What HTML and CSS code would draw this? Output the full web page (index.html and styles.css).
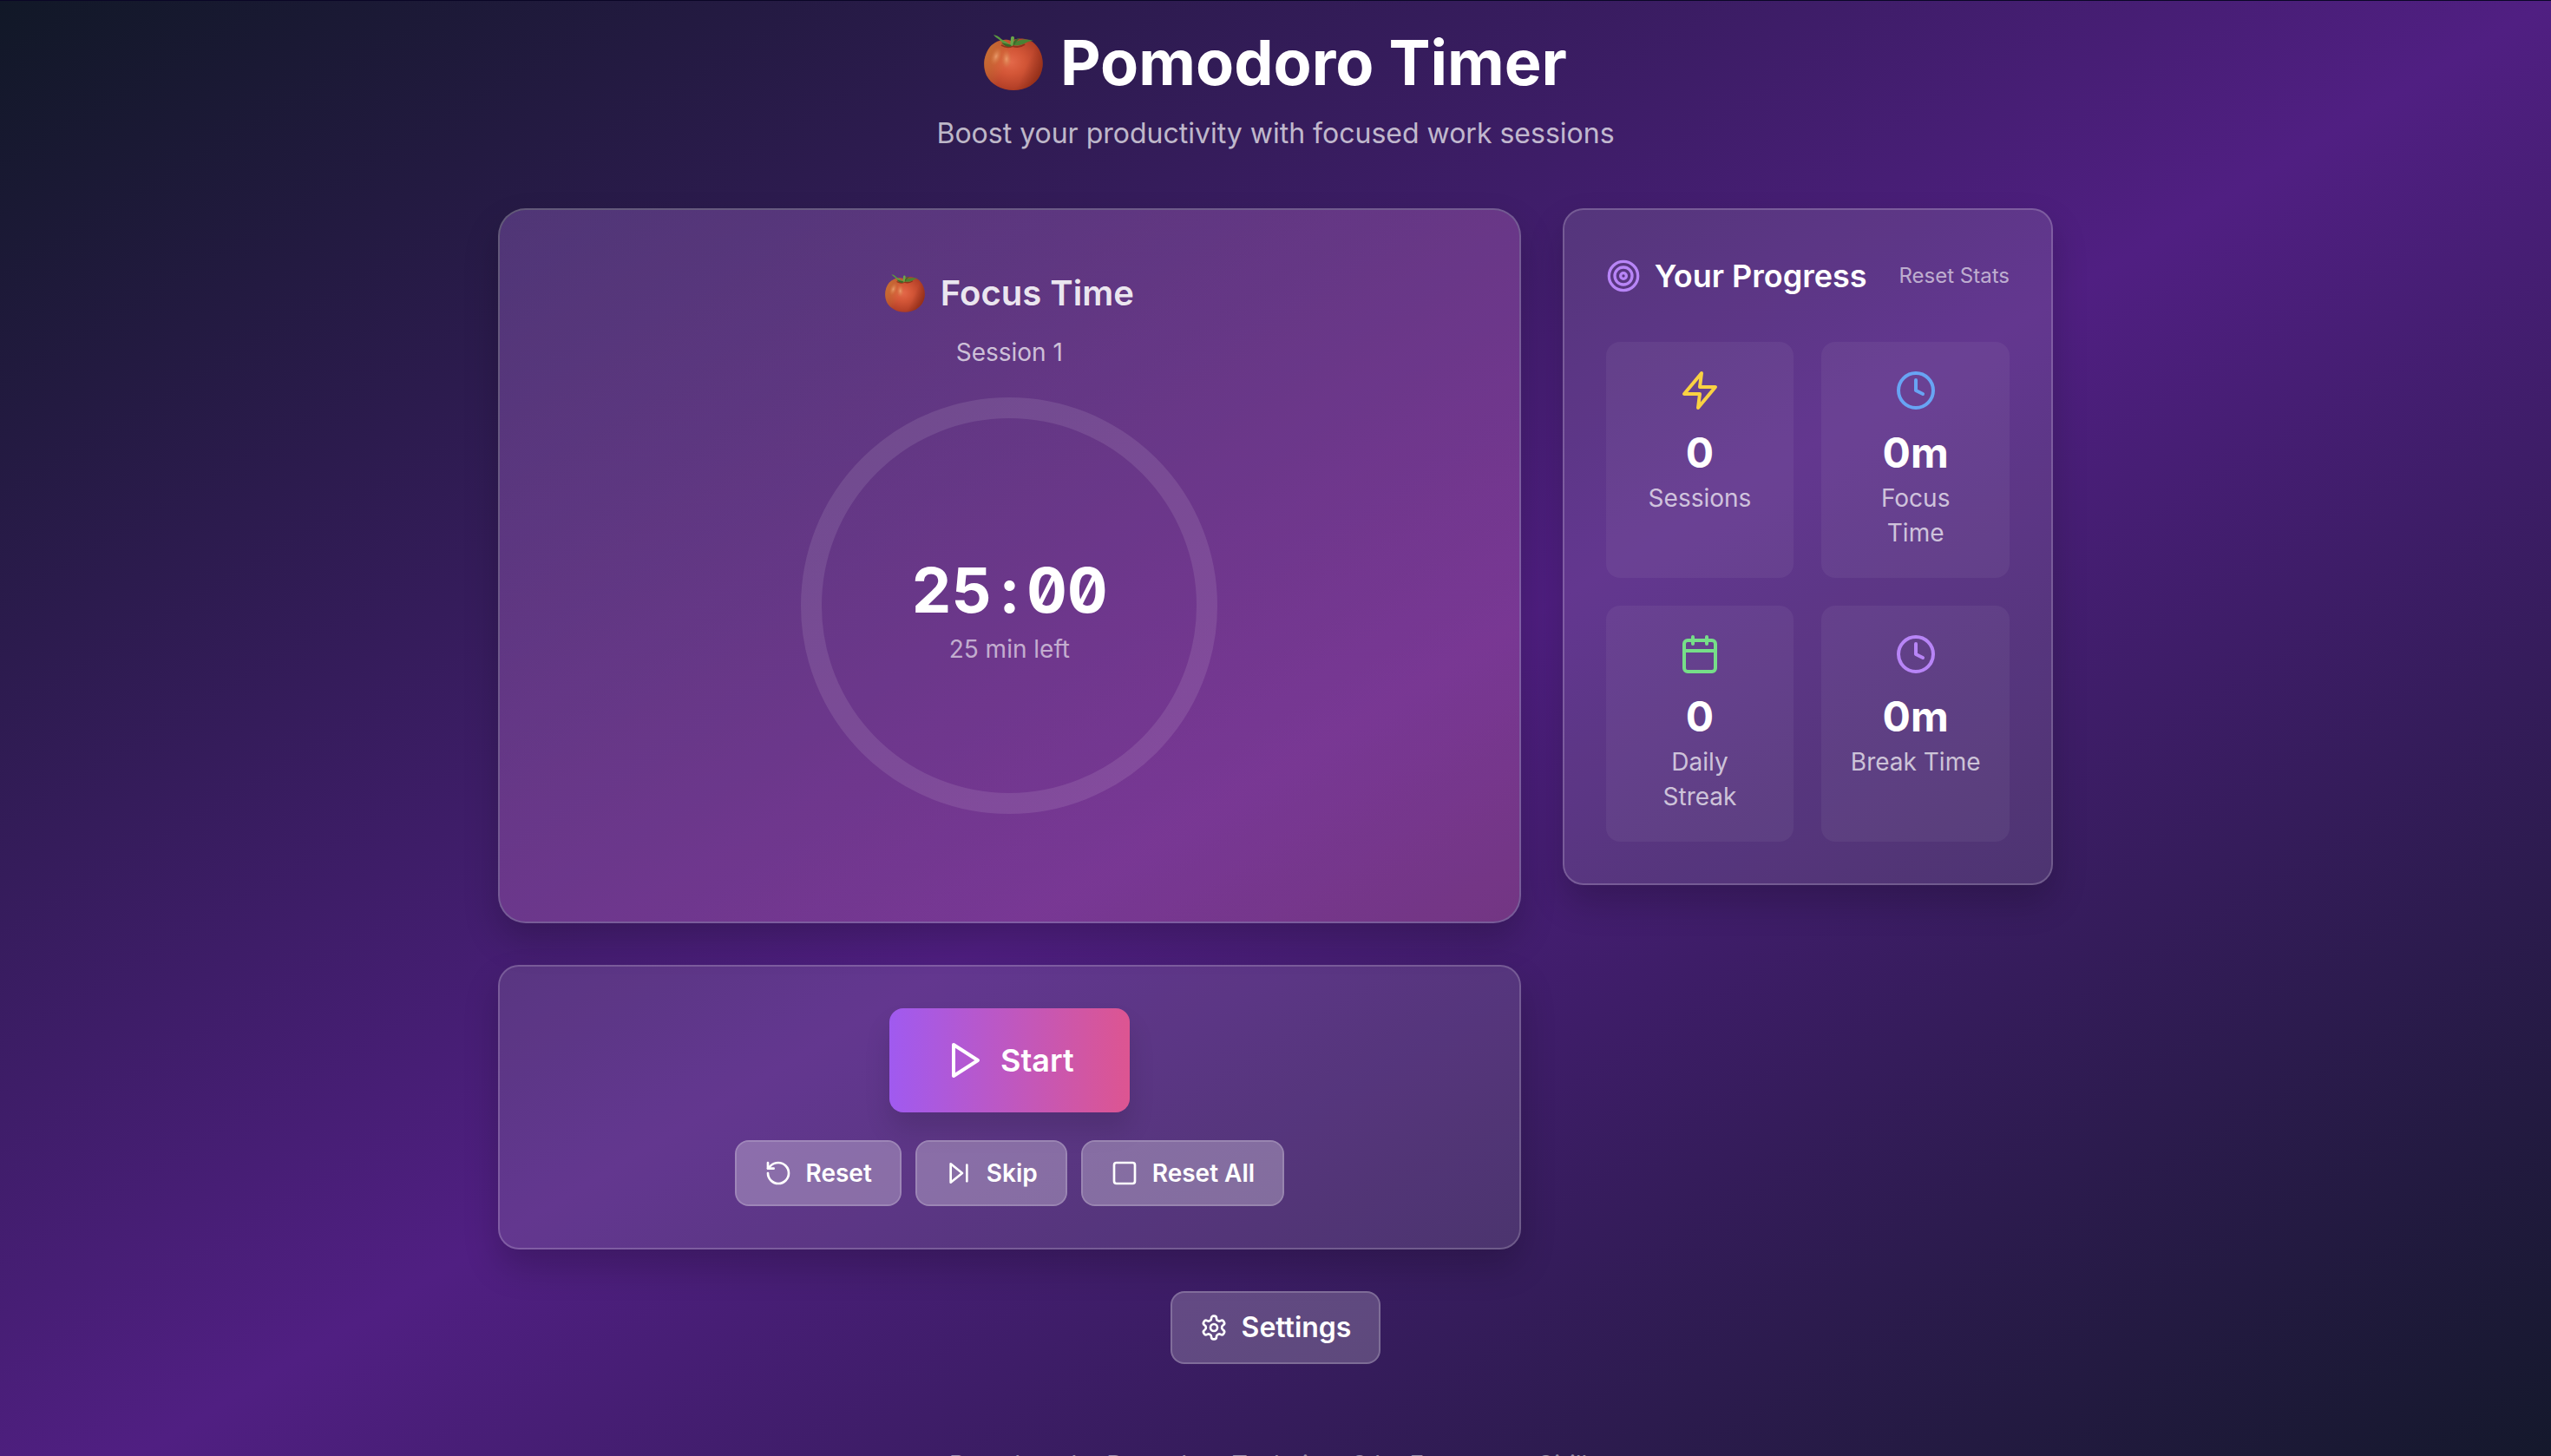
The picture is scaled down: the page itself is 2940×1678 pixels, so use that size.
FILE: index.html
```html
<!DOCTYPE html>
<html lang="en">
<head>
<meta charset="utf-8">
<title>Pomodoro Timer</title>
<link rel="stylesheet" href="styles.css">
</head>
<body>
<svg class="defs" aria-hidden="true">
  <defs>
    <radialGradient id="tomato-skin" cx="0.45" cy="0.45" r="0.6">
      <stop offset="0" stop-color="#e4694a"/>
      <stop offset="0.4" stop-color="#d35637"/>
      <stop offset="0.8" stop-color="#b8432a"/>
      <stop offset="1" stop-color="#a8381f"/>
    </radialGradient>
    <radialGradient id="tomato-glow">
      <stop offset="0" stop-color="#eda070" stop-opacity="0.9"/>
      <stop offset="1" stop-color="#cf7a40" stop-opacity="0"/>
    </radialGradient>
    <linearGradient id="tomato-shade" x1="0" y1="0.3" x2="1" y2="0.7">
      <stop offset="0" stop-color="#c98138" stop-opacity="0.7"/>
      <stop offset="0.4" stop-color="#c98138" stop-opacity="0"/>
      <stop offset="0.7" stop-color="#7c2410" stop-opacity="0"/>
      <stop offset="1" stop-color="#7c2410" stop-opacity="0.6"/>
    </linearGradient>
    <symbol id="tomato" viewBox="0 0 68 64">
      <path id="tomato-body" d="M31 7C38 3 53 3 60 12c8 9 10 23 5 34-5 11-17 18-31 18S8 57 3 47C-2 36 0 23 7 14 14 6 25 4 31 7z" fill="url(#tomato-skin)"/>
      <path d="M31 7C38 3 53 3 60 12c8 9 10 23 5 34-5 11-17 18-31 18S8 57 3 47C-2 36 0 23 7 14 14 6 25 4 31 7z" fill="url(#tomato-shade)"/>
      <ellipse cx="14" cy="25" rx="6" ry="11" fill="url(#tomato-glow)" transform="rotate(20 14 25)"/>
      <ellipse cx="26" cy="28" rx="6" ry="11" fill="url(#tomato-glow)"/>
      <path d="M20 12c5 3 9 3 13 1 6 2 10 1 14-2" fill="none" stroke="#7a2412" stroke-width="2" opacity="0.7"/>
      <path d="M11 0c5 1 7 3 9 5 4 2 8 5 11 7l-1 2c-5-2-9-5-12-8-2-2-5-3-7-6z" fill="#5c9a41"/>
      <path d="M33 12c5-6 12-8 24-5-4 0-6 1-8 2-5 3-10 4-16 3z" fill="#4a8234"/>
      <path d="M33 11c1-4 4-7 9-7-3 2-5 4-7 8z" fill="#3c6c2a"/>
      <path d="M31 4c0-3 4-3 4 0l-2 9h-3z" fill="#69a64a"/>
      <path d="M20 9c4 1 8 2 12 3l-2 2c-4 0-8-2-10-5z" fill="#3b6628"/>
    </symbol>
  </defs>
</svg>
<div class="page">
  <header class="header">
    <h1 class="title"><svg class="title-icon" aria-hidden="true"><use href="#tomato"/></svg>Pomodoro Timer</h1>
    <p class="subtitle">Boost your productivity with focused work sessions</p>
  </header>

  <main class="layout">
    <div class="main-column">
      <section class="card timer">
        <h2 class="mode"><svg class="mode-icon" aria-hidden="true"><use href="#tomato"/></svg>Focus Time</h2>
        <p class="session">Session 1</p>
        <div class="dial">
          <div class="time">25<span class="colon">:</span>00</div>
          <div class="left">25 min left</div>
        </div>
      </section>

      <section class="card controls">
        <button class="btn btn-primary" type="button">
          <svg class="icon icon-lg" viewBox="0 0 24 24"><path d="M5 3l14 9-14 9z"/></svg>Start
        </button>
        <div class="button-row">
          <button class="btn btn-glass" type="button">
            <svg class="icon icon-sm" viewBox="0 0 24 24"><path d="M3 12a9 9 0 1 0 9-9 9.75 9.75 0 0 0-6.74 2.74L3 8"/><path d="M3 3v5h5"/></svg>Reset
          </button>
          <button class="btn btn-glass" type="button">
            <svg class="icon icon-sm" viewBox="0 0 24 24"><path d="M5 4l10 8-10 8z"/><path d="M19 5v14"/></svg>Skip
          </button>
          <button class="btn btn-glass" type="button">
            <svg class="icon icon-sm" viewBox="0 0 24 24"><rect x="3" y="3" width="18" height="18" rx="2"/></svg>Reset All
          </button>
        </div>
      </section>
    </div>

    <aside class="card progress">
      <div class="progress-head">
        <h2 class="progress-title">
          <svg class="icon icon-md violet" viewBox="0 0 24 24"><circle cx="12" cy="12" r="10"/><circle cx="12" cy="12" r="6"/><circle cx="12" cy="12" r="2"/></svg>Your Progress
        </h2>
        <button class="link-button" type="button">Reset Stats</button>
      </div>
      <div class="stats">
        <div class="stat">
          <svg class="icon icon-lg yellow" viewBox="0 0 24 24"><path d="M13 2L3 14h9l-1 8 10-12h-9z"/></svg>
          <div class="value">0</div>
          <div class="label">Sessions</div>
        </div>
        <div class="stat">
          <svg class="icon icon-lg blue" viewBox="0 0 24 24"><circle cx="12" cy="12" r="10"/><path d="M12 6v6l4 2"/></svg>
          <div class="value">0m</div>
          <div class="label">Focus Time</div>
        </div>
        <div class="stat">
          <svg class="icon icon-lg green" viewBox="0 0 24 24"><rect x="3" y="4" width="18" height="18" rx="2"/><path d="M16 2v4M8 2v4M3 10h18"/></svg>
          <div class="value">0</div>
          <div class="label">Daily Streak</div>
        </div>
        <div class="stat">
          <svg class="icon icon-lg violet" viewBox="0 0 24 24"><circle cx="12" cy="12" r="10"/><path d="M12 6v6l4 2"/></svg>
          <div class="value">0m</div>
          <div class="label">Break Time</div>
        </div>
      </div>
    </aside>
  </main>

  <div class="settings-row">
    <button class="btn btn-settings" type="button">
      <svg class="icon icon-sm" viewBox="0 0 24 24"><path d="M12.22 2h-.44a2 2 0 0 0-2 2v.18a2 2 0 0 1-1 1.73l-.43.25a2 2 0 0 1-2 0l-.15-.08a2 2 0 0 0-2.73.73l-.22.38a2 2 0 0 0 .73 2.73l.15.1a2 2 0 0 1 1 1.72v.51a2 2 0 0 1-1 1.74l-.15.09a2 2 0 0 0-.73 2.73l.22.38a2 2 0 0 0 2.73.73l.15-.08a2 2 0 0 1 2 0l.43.25a2 2 0 0 1 1 1.73V20a2 2 0 0 0 2 2h.44a2 2 0 0 0 2-2v-.18a2 2 0 0 1 1-1.73l.43-.25a2 2 0 0 1 2 0l.15.08a2 2 0 0 0 2.73-.73l.22-.39a2 2 0 0 0-.73-2.73l-.15-.08a2 2 0 0 1-1-1.74v-.5a2 2 0 0 1 1-1.74l.15-.09a2 2 0 0 0 .73-2.73l-.22-.38a2 2 0 0 0-2.73-.73l-.15.08a2 2 0 0 1-2 0l-.43-.25a2 2 0 0 1-1-1.73V4a2 2 0 0 0-2-2z"/><circle cx="12" cy="12" r="3"/></svg>Settings
    </button>
  </div>

  <footer class="footer">Based on the Pomodoro Technique® by Francesco Cirillo</footer>
</div>
</body>
</html>
```

FILE: styles.css
```css
* {
  box-sizing: border-box;
  margin: 0;
}

html {
  height: 100%;
}

body {
  height: 100%;
  overflow: hidden;
  font-family: Inter, sans-serif;
  color: #fff;
  background: #111827;
}

.defs {
  position: absolute;
  width: 0;
  height: 0;
}

.page {
  padding: 31px 64px 64px;
  border-top: 1px solid #0a0626;
  background: linear-gradient(to bottom right, #111827, #501f82, #111827);
}

.header {
  margin-bottom: 62px;
  text-align: center;
}

.title {
  display: flex;
  justify-content: center;
  align-items: center;
  gap: 20px;
  margin-bottom: 18px;
  font-size: 72px;
  line-height: 80px;
  font-weight: 700;
}

.title-icon {
  width: 68px;
  height: 64px;
}

.subtitle {
  font-size: 32px;
  line-height: 48px;
  color: rgba(255, 255, 255, 0.7);
}

.layout {
  display: grid;
  grid-template-columns: repeat(3, minmax(0, 1fr));
  align-items: start;
  gap: 48px;
  max-width: 1792px;
  margin: 0 auto;
}

.main-column {
  display: grid;
  grid-column: span 2;
  gap: 48px;
}

.card {
  border: 2px solid rgba(255, 255, 255, 0.2);
  border-radius: 24px;
  background: rgba(255, 255, 255, 0.11);
  background-clip: padding-box;
  box-shadow: 0 20px 40px rgba(0, 0, 0, 0.2);
}

.timer {
  display: flex;
  flex-direction: column;
  align-items: center;
  padding: 64px 64px 124px;
  border-radius: 32px;
  background: linear-gradient(to bottom right, rgba(168, 85, 247, 0.2), rgba(236, 72, 153, 0.2)) padding-box, linear-gradient(rgba(255, 255, 255, 0.09), rgba(255, 255, 255, 0.09)) padding-box;
}

.mode {
  display: flex;
  align-items: center;
  gap: 18px;
  margin-bottom: 16px;
  font-size: 40px;
  line-height: 64px;
  font-weight: 600;
  color: rgba(255, 255, 255, 0.9);
}

.mode-icon {
  width: 46px;
  height: 44px;
}

.session {
  margin-bottom: 32px;
  font-size: 28px;
  line-height: 40px;
  color: rgba(255, 255, 255, 0.7);
}

.dial {
  display: flex;
  flex-direction: column;
  align-items: center;
  justify-content: center;
  gap: 8px;
  width: 480px;
  height: 480px;
  padding-top: 12px;
  border: 24px solid rgba(255, 255, 255, 0.1);
  border-radius: 50%;
}

.time {
  font-size: 72px;
  line-height: 80px;
  font-weight: 700;
  font-feature-settings: "tnum", "zero";
}

.colon {
  display: inline-block;
  width: 40px;
  text-align: center;
}

.left {
  font-size: 28px;
  line-height: 40px;
  color: rgba(255, 255, 255, 0.6);
}

.controls {
  display: flex;
  flex-direction: column;
  align-items: center;
  gap: 32px;
  padding: 48px;
}

.button-row {
  display: flex;
  gap: 16px;
}

.btn {
  display: flex;
  align-items: center;
  gap: 16px;
  border-radius: 16px;
  font-family: inherit;
  font-weight: 600;
  color: #fff;
}

.btn-primary {
  padding: 32px 64px;
  border: 0;
  font-size: 36px;
  line-height: 56px;
  background: linear-gradient(to right, #a05af0, #dd5591);
  box-shadow: 0 20px 30px rgba(0, 0, 0, 0.12);
}

.btn-glass {
  padding: 16px 32px;
  border: 2px solid rgba(255, 255, 255, 0.2);
  font-size: 28px;
  line-height: 40px;
  background: rgba(255, 255, 255, 0.28) padding-box;
  border-color: rgba(255, 255, 255, 0.4);
}

.btn-settings {
  padding: 16px 32px;
  border: 2px solid rgba(255, 255, 255, 0.2);
  font-size: 32px;
  line-height: 48px;
  background: rgba(255, 255, 255, 0.2);
}

.icon {
  flex: none;
  fill: none;
  stroke: currentColor;
  stroke-width: 2;
  stroke-linecap: round;
  stroke-linejoin: round;
}

.icon-sm {
  width: 32px;
  height: 32px;
}

.icon-md {
  width: 40px;
  height: 40px;
}

.icon-lg {
  width: 48px;
  height: 48px;
}

.yellow {
  color: #f9d142;
}

.blue {
  color: #68a4f4;
}

.green {
  color: #76de88;
}

.violet {
  color: #b885f7;
}

.card {
  border-color: rgba(255, 255, 255, 0.28);
}

.progress {
  padding: 48px;
}

.progress-head {
  display: flex;
  justify-content: space-between;
  align-items: center;
  margin-bottom: 48px;
}

.progress-title {
  display: flex;
  align-items: center;
  gap: 16px;
  font-size: 36px;
  line-height: 56px;
  font-weight: 600;
  white-space: nowrap;
}

.link-button {
  padding: 0;
  border: 0;
  font-family: inherit;
  font-size: 24px;
  line-height: 32px;
  white-space: nowrap;
  color: rgba(255, 255, 255, 0.6);
  background: none;
}

.stats {
  display: grid;
  grid-template-columns: repeat(2, minmax(0, 1fr));
  gap: 32px;
}

.stat {
  display: flex;
  flex-direction: column;
  align-items: center;
  padding: 32px;
  border-radius: 16px;
  text-align: center;
  background: rgba(255, 255, 255, 0.05);
}

.value {
  margin-top: 16px;
  font-size: 48px;
  line-height: 64px;
  font-weight: 700;
}

.label {
  font-size: 28px;
  line-height: 40px;
  color: rgba(255, 255, 255, 0.7);
}

.settings-row {
  display: flex;
  justify-content: center;
  margin: 48px 0 96px;
}

.footer {
  font-size: 28px;
  line-height: 40px;
  text-align: center;
  color: rgba(255, 255, 255, 0.5);
}
```
